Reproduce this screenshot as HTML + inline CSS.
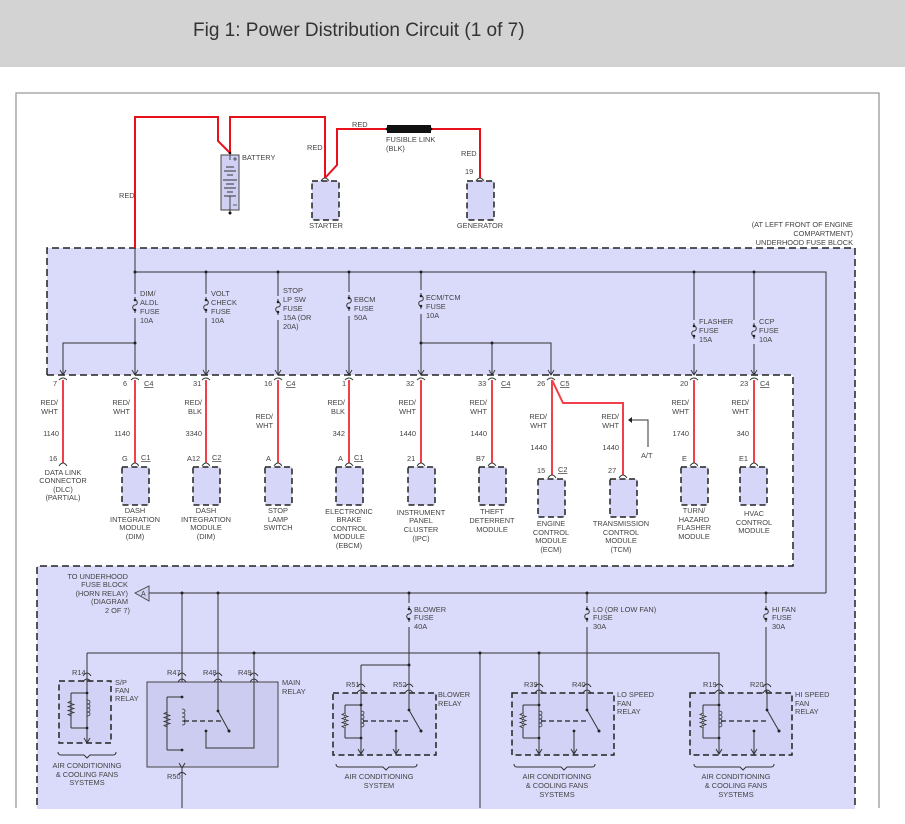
<!DOCTYPE html>
<html><head><meta charset="utf-8"><style>
html,body{margin:0;padding:0;background:#fff;width:905px;height:824px;overflow:hidden}
#hd{position:absolute;left:0;top:0;width:905px;height:67px;background:#d3d3d3}
#hd span{position:absolute;left:193px;top:20px;font:19px "Liberation Sans",sans-serif;color:#333}
svg{position:absolute;left:0;top:0}
text{font-family:"Liberation Sans",sans-serif;font-size:7.4px;fill:#444}
.m{text-anchor:middle}.e{text-anchor:end}
.w{stroke:#333;stroke-width:1;fill:none}
.r{stroke:#e8101a;stroke-width:2;fill:none}
.rl{stroke:#f0404a;stroke-width:2;fill:none}
.d{stroke:#222;stroke-width:1.5;stroke-dasharray:7,4;fill:none}
.bx{fill:#d6d6f8;stroke:#222;stroke-width:1.5;stroke-dasharray:6,3.5}
</style></head><body>
<div id="hd"><span>Fig 1: Power Distribution Circuit (1 of 7)</span></div>
<svg width="905" height="824" viewBox="0 0 905 824">
<defs>
<path id="cap" d="M-4,3 Q0,-3 4,3" stroke="#333" fill="none" stroke-width="0.9"/>
<g id="arr"><path d="M-3,-5 L0,0 L3,-5" stroke="#333" fill="none" stroke-width="0.9"/><path d="M-4,5 Q0,1 4,5" stroke="#333" fill="none" stroke-width="0.9"/></g>
<g id="fuse"><path d="M0,-9 L0,-6 C3,-6 3,-1 0,-1 C-3,-1 -3,4 0,4 L0,7" stroke="#333" fill="none" stroke-width="1"/><circle cx="0" cy="-6" r="1.3" fill="#222"/><circle cx="0" cy="4" r="1.3" fill="#222"/></g>
<circle id="dot" r="1.5" fill="#222"/>
<g id="relay">
<path class="w" d="M-16,12 H0 M-16,45 H0 M-16,12 V45"/>
<path d="M-16,20 l-3,1.5 l6,2 l-6,2 l6,2 l-6,2 l6,2 l-6,2 l3,1.5" stroke="#333" fill="#ddd" stroke-width="0.8"/>
<path d="M0,18 c4,0 4,4 0,4 c4,0 4,4 0,4 c4,0 4,4 0,4 c4,0 4,4 0,4" stroke="#333" fill="none" stroke-width="0.8"/>
<path d="M2,28 H48" stroke="#222" stroke-width="1.3" stroke-dasharray="5,3" fill="none"/>
<path class="w" d="M0,-3 V60"/><path d="M-3,56 L0,61 L3,56" class="w"/>
<circle cx="0" cy="12" r="1.4" fill="#222"/><circle cx="0" cy="45" r="1.4" fill="#222"/>
<path class="w" d="M48,-3 V17 L60,38"/><circle cx="48" cy="17" r="1.4" fill="#222"/><circle cx="60" cy="38" r="1.5" fill="#222"/>
<path class="w" d="M35,38 V61"/><circle cx="35" cy="38" r="1.4" fill="#222"/><path d="M32,56 L35,61 L38,56" class="w"/>
<path class="w" d="M-4,-6 Q0,-12 4,-6 M-4,0 Q0,-6 4,0 M44,-6 Q48,-12 52,-6 M44,0 Q48,-6 52,0"/>
</g>
</defs>

<path d="M16,808 V93 H879 V808" stroke="#999" stroke-width="1.3" fill="none"/>

<path d="M47,248 H855 V824 H37 V566 H47 Z" fill="#dadafb"/>
<rect x="47" y="375" width="746" height="191" fill="#fff"/>
<path class="d" d="M47,375 V248 H855 V824"/>
<path class="d" d="M47,375 H793 V566 H37 V824"/>

<path class="r" d="M135,248 V117 H218 V141 L230,153 M230,153 V117 H325 V178 M325,178 L337,165 V129 H387 M431,129 H480 V178"/>
<rect x="387" y="125" width="44" height="8" fill="#111"/>
<circle cx="387" cy="129" r="1.4" fill="#111"/><circle cx="431" cy="129" r="1.4" fill="#111"/>
<text x="119" y="198">RED</text>
<text x="352" y="127">RED</text>
<text x="307" y="150">RED</text>
<text x="461" y="156">RED</text>
<text x="386" y="142">FUSIBLE LINK</text><text x="386" y="151">(BLK)</text>
<rect x="221" y="155" width="18" height="55" fill="#d0d0f4" stroke="#444" stroke-width="1"/>
<path d="M230,155 V160 M226,167 H234 M224,171 H236 M227,175 H233 M223,180 H237 M226,184 H234 M224,188 H236 M227,192 H233 M224,196 H236 M230,196 V213" stroke="#333" stroke-width="0.9"/>
<path d="M233,159 H237 M235,157 V161 M233,205 H237" stroke="#333" stroke-width="0.8"/>
<circle cx="230" cy="213" r="1.5" fill="#111"/><circle cx="230" cy="153" r="1.3" fill="#111"/>
<text x="242" y="160">BATTERY</text>
<use href="#cap" x="325" y="178"/>
<rect x="312" y="181" width="27" height="39" class="bx"/>
<text x="326" y="228" class="m">STARTER</text>
<text x="465" y="174">19</text>
<use href="#cap" x="480" y="178"/>
<rect x="467" y="181" width="27" height="39" class="bx"/>
<text x="480" y="228" class="m">GENERATOR</text>
<text x="853" y="227" class="e">(AT LEFT FRONT OF ENGINE</text>
<text x="853" y="236" class="e">COMPARTMENT)</text>
<text x="853" y="245" class="e">UNDERHOOD FUSE BLOCK</text>

<path class="w" d="M135,248 V375 M135,272 H826 V593 M206,272 V375 M278,272 V375 M349,272 V375 M421,272 V375 M694,272 V375 M754,272 V375 M135,343 H63 V375 M421,343 H551 V375 M492,343 V375"/>
<use href="#dot" x="135" y="272"/><use href="#dot" x="206" y="272"/><use href="#dot" x="278" y="272"/><use href="#dot" x="349" y="272"/><use href="#dot" x="421" y="272"/><use href="#dot" x="694" y="272"/><use href="#dot" x="754" y="272"/>
<use href="#dot" x="135" y="343"/><use href="#dot" x="421" y="343"/><use href="#dot" x="492" y="343"/>
<rect x="131" y="294" width="8" height="24" fill="#dadafb"/><use href="#fuse" x="135" y="306"/>
<rect x="202" y="294" width="8" height="24" fill="#dadafb"/><use href="#fuse" x="206" y="306"/>
<rect x="274" y="296" width="8" height="24" fill="#dadafb"/><use href="#fuse" x="278" y="308"/>
<rect x="345" y="292" width="8" height="24" fill="#dadafb"/><use href="#fuse" x="349" y="304"/>
<rect x="417" y="290" width="8" height="24" fill="#dadafb"/><use href="#fuse" x="421" y="302"/>
<rect x="690" y="320" width="8" height="24" fill="#dadafb"/><use href="#fuse" x="694" y="332"/>
<rect x="750" y="320" width="8" height="24" fill="#dadafb"/><use href="#fuse" x="754" y="332"/>
<text x="140" y="296">DIM/</text><text x="140" y="305">ALDL</text><text x="140" y="314">FUSE</text><text x="140" y="323">10A</text>
<text x="211" y="296">VOLT</text><text x="211" y="305">CHECK</text><text x="211" y="314">FUSE</text><text x="211" y="323">10A</text>
<text x="283" y="293">STOP</text><text x="283" y="302">LP SW</text><text x="283" y="311">FUSE</text><text x="283" y="320">15A (OR</text><text x="283" y="329">20A)</text>
<text x="354" y="302">EBCM</text><text x="354" y="311">FUSE</text><text x="354" y="320">50A</text>
<text x="426" y="300">ECM/TCM</text><text x="426" y="309">FUSE</text><text x="426" y="318">10A</text>
<text x="699" y="324">FLASHER</text><text x="699" y="333">FUSE</text><text x="699" y="342">15A</text>
<text x="759" y="324">CCP</text><text x="759" y="333">FUSE</text><text x="759" y="342">10A</text>
<use href="#arr" x="63" y="375"/><use href="#arr" x="135" y="375"/><use href="#arr" x="206" y="375"/><use href="#arr" x="278" y="375"/><use href="#arr" x="349" y="375"/><use href="#arr" x="421" y="375"/><use href="#arr" x="492" y="375"/><use href="#arr" x="551" y="375"/><use href="#arr" x="694" y="375"/><use href="#arr" x="754" y="375"/>

<path class="rl" d="M63,380 V463 M135,380 V463 M206,380 V463 M278,380 V463 M349,380 V463 M421,380 V463 M492,380 V463 M552,380 V475 M552,380 L563,403 H623 V475 M694,380 V463 M754,380 V463"/>
<path class="w" d="M648,447 V420 H629"/><path d="M632,417 L628,420 L632,423 Z" fill="#222"/>
<text x="641" y="458">A/T</text>
<g>
<text x="53" y="386">7</text>
<text x="123" y="386">6</text><text x="144" y="386" text-decoration="underline">C4</text>
<text x="193" y="386">31</text>
<text x="264" y="386">16</text><text x="286" y="386" text-decoration="underline">C4</text>
<text x="342" y="386">1</text>
<text x="406" y="386">32</text>
<text x="478" y="386">33</text><text x="501" y="386" text-decoration="underline">C4</text>
<text x="537" y="386">26</text><text x="560" y="386" text-decoration="underline">C5</text>
<text x="680" y="386">20</text>
<text x="740" y="386">23</text><text x="760" y="386" text-decoration="underline">C4</text>
</g>
<g>
<text x="58" y="405" class="e">RED/</text><text x="58" y="414" class="e">WHT</text><text x="59" y="436" class="e">1140</text>
<text x="130" y="405" class="e">RED/</text><text x="130" y="414" class="e">WHT</text><text x="130" y="436" class="e">1140</text>
<text x="202" y="405" class="e">RED/</text><text x="202" y="414" class="e">BLK</text><text x="202" y="436" class="e">3340</text>
<text x="273" y="419" class="e">RED/</text><text x="273" y="428" class="e">WHT</text>
<text x="345" y="405" class="e">RED/</text><text x="345" y="414" class="e">BLK</text><text x="345" y="436" class="e">342</text>
<text x="416" y="405" class="e">RED/</text><text x="416" y="414" class="e">WHT</text><text x="416" y="436" class="e">1440</text>
<text x="487" y="405" class="e">RED/</text><text x="487" y="414" class="e">WHT</text><text x="487" y="436" class="e">1440</text>
<text x="547" y="419" class="e">RED/</text><text x="547" y="428" class="e">WHT</text><text x="547" y="450" class="e">1440</text>
<text x="619" y="419" class="e">RED/</text><text x="619" y="428" class="e">WHT</text><text x="619" y="450" class="e">1440</text>
<text x="689" y="405" class="e">RED/</text><text x="689" y="414" class="e">WHT</text><text x="689" y="436" class="e">1740</text>
<text x="749" y="405" class="e">RED/</text><text x="749" y="414" class="e">WHT</text><text x="749" y="436" class="e">340</text>
</g>
<text x="49" y="461">16</text><use href="#cap" x="63" y="463"/>
<text x="122" y="461">G</text><text x="141" y="460" text-decoration="underline">C1</text><use href="#cap" x="135" y="463"/>
<text x="187" y="461">A12</text><text x="212" y="460" text-decoration="underline">C2</text><use href="#cap" x="206" y="463"/>
<text x="266" y="461">A</text><use href="#cap" x="278" y="463"/>
<text x="338" y="461">A</text><text x="354" y="460" text-decoration="underline">C1</text><use href="#cap" x="349" y="463"/>
<text x="407" y="461">21</text><use href="#cap" x="421" y="463"/>
<text x="476" y="461">B7</text><use href="#cap" x="492" y="463"/>
<text x="537" y="473">15</text><text x="558" y="472" text-decoration="underline">C2</text><use href="#cap" x="552" y="475"/>
<text x="608" y="473">27</text><use href="#cap" x="623" y="475"/>
<text x="682" y="461">E</text><use href="#cap" x="694" y="463"/>
<text x="739" y="461">E1</text><use href="#cap" x="754" y="463"/>
<rect x="122" y="467" width="27" height="38" class="bx"/>
<rect x="193" y="467" width="27" height="38" class="bx"/>
<rect x="265" y="467" width="27" height="38" class="bx"/>
<rect x="336" y="467" width="27" height="38" class="bx"/>
<rect x="408" y="467" width="27" height="38" class="bx"/>
<rect x="479" y="467" width="27" height="38" class="bx"/>
<rect x="538" y="479" width="27" height="38" class="bx"/>
<rect x="610" y="479" width="27" height="38" class="bx"/>
<rect x="681" y="467" width="27" height="38" class="bx"/>
<rect x="740" y="467" width="27" height="38" class="bx"/>
<g>
<text x="63" y="475" class="m">DATA LINK</text><text x="63" y="483" class="m">CONNECTOR</text><text x="63" y="492" class="m">(DLC)</text><text x="63" y="500" class="m">(PARTIAL)</text>
<text x="135" y="513" class="m">DASH</text><text x="135" y="522" class="m">INTEGRATION</text><text x="135" y="530" class="m">MODULE</text><text x="135" y="539" class="m">(DIM)</text>
<text x="206" y="513" class="m">DASH</text><text x="206" y="522" class="m">INTEGRATION</text><text x="206" y="530" class="m">MODULE</text><text x="206" y="539" class="m">(DIM)</text>
<text x="278" y="513" class="m">STOP</text><text x="278" y="522" class="m">LAMP</text><text x="278" y="530" class="m">SWITCH</text>
<text x="349" y="514" class="m">ELECTRONIC</text><text x="349" y="522" class="m">BRAKE</text><text x="349" y="531" class="m">CONTROL</text><text x="349" y="539" class="m">MODULE</text><text x="349" y="548" class="m">(EBCM)</text>
<text x="421" y="515" class="m">INSTRUMENT</text><text x="421" y="523" class="m">PANEL</text><text x="421" y="532" class="m">CLUSTER</text><text x="421" y="541" class="m">(IPC)</text>
<text x="492" y="514" class="m">THEFT</text><text x="492" y="523" class="m">DETERRENT</text><text x="492" y="532" class="m">MODULE</text>
<text x="551" y="526" class="m">ENGINE</text><text x="551" y="535" class="m">CONTROL</text><text x="551" y="543" class="m">MODULE</text><text x="551" y="552" class="m">(ECM)</text>
<text x="621" y="526" class="m">TRANSMISSION</text><text x="621" y="535" class="m">CONTROL</text><text x="621" y="543" class="m">MODULE</text><text x="621" y="552" class="m">(TCM)</text>
<text x="694" y="513" class="m">TURN/</text><text x="694" y="522" class="m">HAZARD</text><text x="694" y="530" class="m">FLASHER</text><text x="694" y="539" class="m">MODULE</text>
<text x="754" y="516" class="m">HVAC</text><text x="754" y="525" class="m">CONTROL</text><text x="754" y="533" class="m">MODULE</text>
</g>

<text x="128" y="579" class="e">TO UNDERHOOD</text><text x="128" y="587" class="e">FUSE BLOCK</text><text x="128" y="596" class="e">(HORN RELAY)</text><text x="128" y="604" class="e">(DIAGRAM</text><text x="130" y="613" class="e">2 OF 7)</text>
<path d="M135,593 L149,586 L149,601 Z" fill="#d0d0f4" stroke="#444" stroke-width="0.9"/>
<text x="141" y="596" style="font-size:7px">A</text>
<path class="w" d="M149,593 H826 M182,593 V808 M218,593 V682 M409,593 V693 M587,593 V693 M766,593 V693 M87,653 H719 V693 M87,653 V681 M254,653 V682 M480,653 V808 M539,653 V693 M361,665 H409 M361,665 V693"/>
<use href="#dot" x="182" y="593"/><use href="#dot" x="218" y="593"/><use href="#dot" x="409" y="593"/><use href="#dot" x="587" y="593"/><use href="#dot" x="766" y="593"/>
<use href="#dot" x="254" y="653"/><use href="#dot" x="480" y="653"/><use href="#dot" x="539" y="653"/><use href="#dot" x="409" y="665"/>
<rect x="405" y="603" width="8" height="24" fill="#dadafb"/><use href="#fuse" x="409" y="615"/>
<rect x="583" y="603" width="8" height="24" fill="#dadafb"/><use href="#fuse" x="587" y="615"/>
<rect x="762" y="603" width="8" height="24" fill="#dadafb"/><use href="#fuse" x="766" y="615"/>
<text x="414" y="612">BLOWER</text><text x="414" y="620">FUSE</text><text x="414" y="629">40A</text>
<text x="593" y="612">LO (OR LOW FAN)</text><text x="593" y="620">FUSE</text><text x="593" y="629">30A</text>
<text x="772" y="612">HI FAN</text><text x="772" y="620">FUSE</text><text x="772" y="629">30A</text>

<rect x="59" y="681" width="52" height="62" fill="#d2d2f6" stroke="#222" stroke-width="1.5" stroke-dasharray="6,3.5"/>
<path class="w" d="M71,693 H87 M71,728 H87 M71,693 V728 M87,678 V743"/><path class="w" d="M84,738 L87,743 L90,738"/>
<path d="M71,701 l-3,1.5 l6,2 l-6,2 l6,2 l-6,2 l6,2 l-6,2 l3,1.5" stroke="#333" fill="none" stroke-width="0.8"/>
<path d="M87,700 c4,0 4,4 0,4 c4,0 4,4 0,4 c4,0 4,4 0,4 c4,0 4,4 0,4" stroke="#333" fill="none" stroke-width="0.8"/>
<circle cx="87" cy="693" r="1.4" fill="#222"/><circle cx="87" cy="728" r="1.4" fill="#222"/>
<path class="w" d="M83,676 Q87,670 91,676 M83,682 Q87,676 91,682"/>
<text x="72" y="675">R14</text>
<text x="115" y="685">S/P</text><text x="115" y="693">FAN</text><text x="115" y="701">RELAY</text>

<rect x="147" y="682" width="131" height="85" fill="#ccccf0" stroke="#444" stroke-width="1"/>
<path class="w" d="M167,697 H182 M167,750 H182 M167,697 V750"/>
<path d="M167,712 l-3,1.5 l6,2 l-6,2 l6,2 l-6,2 l6,2 l-6,2 l3,1.5" stroke="#333" fill="none" stroke-width="0.8"/>
<path d="M182,709 c4,0 4,4 0,4 c4,0 4,4 0,4 c4,0 4,4 0,4 c4,0 4,4 0,4" stroke="#333" fill="none" stroke-width="0.8"/>
<path d="M184,721 H221" stroke="#222" stroke-width="1.3" stroke-dasharray="5,3"/>
<circle cx="182" cy="697" r="1.4" fill="#222"/><circle cx="182" cy="750" r="1.4" fill="#222"/>
<path class="w" d="M218,682 V711 L229,731 M206,731 V748 H254 V682"/><circle cx="218" cy="711" r="1.4" fill="#222"/><circle cx="229" cy="731" r="1.5" fill="#222"/><circle cx="206" cy="731" r="1.4" fill="#222"/>
<path class="w" d="M178,676 Q182,670 186,676 M178,682 Q182,676 186,682 M214,676 Q218,670 222,676 M214,682 Q218,676 222,682 M250,676 Q254,670 258,676 M250,682 Q254,676 258,682 M179,763 L182,768 L185,763 M178,775 Q182,770 186,775"/>
<text x="167" y="675">R47</text><text x="203" y="675">R48</text><text x="238" y="675">R49</text>
<text x="282" y="685">MAIN</text><text x="282" y="694">RELAY</text>
<text x="167" y="779">R50</text>

<rect x="333" y="693" width="103" height="62" fill="#d2d2f6" stroke="#222" stroke-width="1.5" stroke-dasharray="6,3.5"/>
<rect x="512" y="693" width="102" height="62" fill="#d2d2f6" stroke="#222" stroke-width="1.5" stroke-dasharray="6,3.5"/>
<rect x="690" y="693" width="102" height="62" fill="#d2d2f6" stroke="#222" stroke-width="1.5" stroke-dasharray="6,3.5"/>
<use href="#relay" x="361" y="693"/>
<use href="#relay" x="539" y="693"/>
<use href="#relay" x="719" y="693"/>
<text x="346" y="687">R51</text><text x="393" y="687">R52</text>
<text x="524" y="687">R39</text><text x="572" y="687">R40</text>
<text x="703" y="687">R19</text><text x="750" y="687">R20</text>
<text x="438" y="697">BLOWER</text><text x="438" y="706">RELAY</text>
<text x="617" y="697">LO SPEED</text><text x="617" y="706">FAN</text><text x="617" y="714">RELAY</text>
<text x="795" y="697">HI SPEED</text><text x="795" y="706">FAN</text><text x="795" y="714">RELAY</text>

<path class="w" stroke-width="0.7" d="M58,752 q0,3 3,3 H84 l3,3 l3,-3 H113 q3,0 3,-3"/>
<path class="w" stroke-width="0.7" d="M336,764 q0,3 3,3 H383 l3,3 l3,-3 H414 q3,0 3,-3"/>
<path class="w" stroke-width="0.7" d="M514,764 q0,3 3,3 H561 l3,3 l3,-3 H592 q3,0 3,-3"/>
<path class="w" stroke-width="0.7" d="M694,764 q0,3 3,3 H740 l3,3 l3,-3 H771 q3,0 3,-3"/>
<text x="87" y="768" class="m">AIR CONDITIONING</text><text x="87" y="777" class="m">&amp; COOLING FANS</text><text x="87" y="785" class="m">SYSTEMS</text>
<text x="379" y="779" class="m">AIR CONDITIONING</text><text x="379" y="788" class="m">SYSTEM</text>
<text x="557" y="779" class="m">AIR CONDITIONING</text><text x="557" y="788" class="m">&amp; COOLING FANS</text><text x="557" y="797" class="m">SYSTEMS</text>
<text x="736" y="779" class="m">AIR CONDITIONING</text><text x="736" y="788" class="m">&amp; COOLING FANS</text><text x="736" y="797" class="m">SYSTEMS</text>
<rect x="0" y="809" width="905" height="15" fill="#fff"/>
</svg>
</body></html>
